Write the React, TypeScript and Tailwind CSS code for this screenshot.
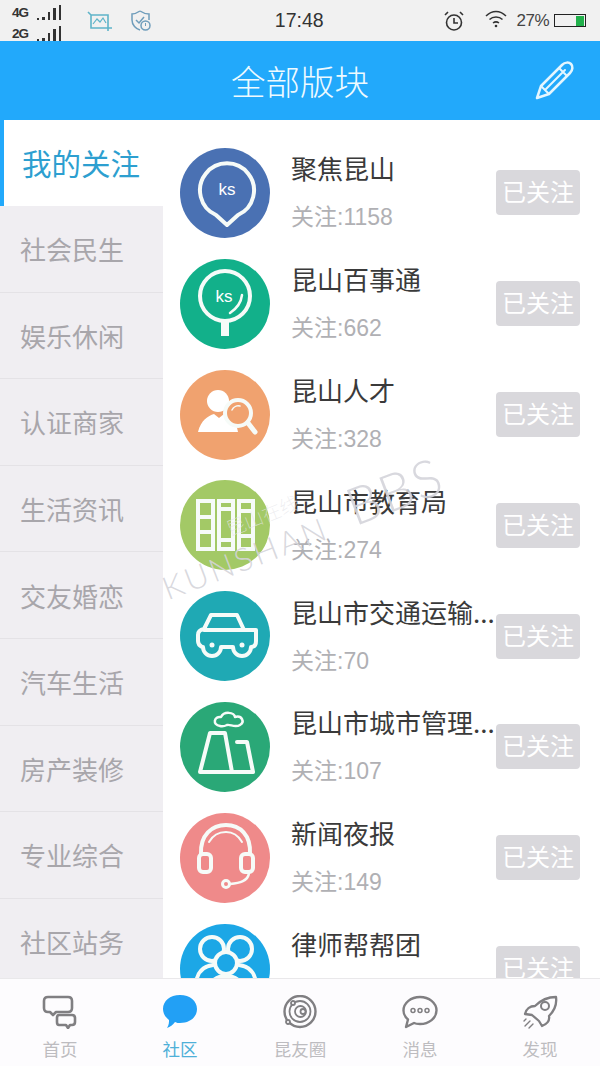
import type { ReactNode } from 'react'

const side = ['社会民生', '娱乐休闲', '认证商家', '生活资讯', '交友婚恋', '汽车生活', '房产装修', '专业综合', '社区站务']

function IconSvg({ children }: { children: ReactNode }) {
  return (
    <svg viewBox="0 0 90 90" className="w-[90px] h-[90px]" fill="none" stroke="#f6fbf8" strokeWidth="4" strokeLinecap="round" strokeLinejoin="round">
      {children}
    </svg>
  )
}

const rows: { name: string; count: number; color: string; icon: ReactNode }[] = [
  {
    name: '聚焦昆山',
    count: 1158,
    color: 'bg-[#4a71b3]',
    icon: (
      <IconSvg>
        <path d="M47 77 L36 67 A27 27 0 1 1 58 67 Z" />
        <text x="47" y="47" textAnchor="middle" fontSize="17" fill="#fff" stroke="none" fontFamily="Liberation Sans">ks</text>
      </IconSvg>
    ),
  },
  {
    name: '昆山百事通',
    count: 662,
    color: 'bg-[#12b08a]',
    icon: (
      <IconSvg>
        <circle cx="45" cy="37" r="25" />
        <path d="M45 62 V77" strokeWidth="8" strokeLinecap="butt" />
        <path d="M62 36 C61 45 56 50 50 54" strokeWidth="2.5" />
        <text x="44" y="43" textAnchor="middle" fontSize="17" fill="#fff" stroke="none" fontFamily="Liberation Sans">ks</text>
      </IconSvg>
    ),
  },
  {
    name: '昆山人才',
    count: 328,
    color: 'bg-[#f0a26f]',
    icon: (
      <IconSvg>
        <circle cx="38" cy="31" r="11" fill="#fff" stroke="none" />
        <path d="M18 62 C21 50 28 46 34 44 L39 48 L44 44 C50 46 56 50 58 62 Z" fill="#fff" stroke="none" />
        <circle cx="58" cy="43" r="13" fill="#f0a26f" strokeWidth="4" />
        <path d="M68 53 L75 62" strokeWidth="5" />
        <path d="M52 40 A7 7 0 0 1 60 36" strokeWidth="1.5" />
      </IconSvg>
    ),
  },
  {
    name: '昆山市教育局',
    count: 274,
    color: 'bg-[#a3c966]',
    icon: (
      <IconSvg>
        <rect x="18" y="21" width="15" height="48" strokeLinejoin="miter" />
        <path d="M18 37 H33 M18 52 H33" strokeLinecap="butt" />
        <rect x="39" y="21" width="14" height="48" strokeLinejoin="miter" />
        <path d="M39 29 H53 M39 60 H53" strokeLinecap="butt" />
        <rect x="59" y="21" width="14" height="48" strokeLinejoin="miter" />
        <path d="M59 31 H73 M59 56 H73" strokeLinecap="butt" />
      </IconSvg>
    ),
  },
  {
    name: '昆山市交通运输...',
    count: 70,
    color: 'bg-[#1fa9b4]',
    icon: (
      <IconSvg>
        <path d="M18 44 Q18 39 24 38 L31 24 H57 L64 39 H76 V50 Q76 56 71 56 A9 9 0 0 1 53 56 H41 A9 9 0 0 1 23 56 H22 Q18 54 18 50 Z" />
        <path d="M24 39 H64" />
        <circle cx="32" cy="54" r="2.5" fill="#f6fbf8" stroke="none" />
        <circle cx="62" cy="54" r="2.5" fill="#f6fbf8" stroke="none" />
      </IconSvg>
    ),
  },
  {
    name: '昆山市城市管理...',
    count: 107,
    color: 'bg-[#2aa877]',
    icon: (
      <IconSvg>
        <path d="M30 31 H45 L52 70 H20 Z" />
        <path d="M57 40 H67 L73 70 H52" />
        <path d="M40 24 C32 23 34 14 41 15 C44 9 54 10 55 15 C62 13 65 20 60 23 C55 26 50 22 47 23 C45 24 43 25 40 24 Z" strokeWidth="2.5" />
      </IconSvg>
    ),
  },
  {
    name: '新闻夜报',
    count: 149,
    color: 'bg-[#ef8a8a]',
    icon: (
      <IconSvg>
        <path d="M21 41 C20 22 32 12 46 12 C60 12 71 22 70 41" />
        <path d="M29 29 C33 22 39 19 46 19 C53 19 58 22 62 29" strokeWidth="2" />
        <rect x="19" y="41" width="12" height="18" rx="4" />
        <rect x="61" y="41" width="12" height="18" rx="4" />
        <path d="M69 60 C68 68 60 70 50 71" strokeWidth="2.5" />
        <circle cx="46" cy="71" r="3.5" strokeWidth="3" />
      </IconSvg>
    ),
  },
  {
    name: '律师帮帮团',
    count: 89,
    color: 'bg-[#1ca7e6]',
    icon: (
      <IconSvg>
        <circle cx="32" cy="25" r="12" />
        <circle cx="60" cy="25" r="12" />
        <circle cx="46" cy="39" r="11" fill="#1ca7e6" />
        <path d="M16 62 C16 48 24 42 33 41 M76 62 C76 48 68 42 59 41 M28 70 C28 58 36 52 46 52 C56 52 64 58 64 70" />
      </IconSvg>
    ),
  },
]

function Signal({ label }: { label: string }) {
  return (
    <div className="flex items-end justify-between h-[15px] text-[13.5px] leading-[14px] font-bold text-[#333] font-['Liberation_Sans',sans-serif]">
      <span className="tracking-[-1px]">{label}</span>
      <div className="flex items-end gap-[3px]">
        <div className="w-[2.5px] h-[2px] bg-[#333]" />
        <div className="w-[2.5px] h-[3px] bg-[#333]" />
        <div className="w-[2.5px] h-[8px] bg-[#333]" />
        <div className="w-[2.5px] h-[12px] bg-[#333]" />
        <div className="w-[2.5px] h-[15px] bg-[#333]" />
      </div>
    </div>
  )
}

function StatusBar() {
  return (
    <div className="h-[41px] shrink-0 bg-[#f1f1f1] flex items-center pl-[12px] pr-[14px] text-[#333]">
      <div className="w-[49px] flex flex-col gap-[6px] pt-[5px]">
        <Signal label="4G" />
        <Signal label="2G" />
      </div>
      <svg viewBox="0 0 25 20" className="w-[25px] h-[20px] ml-[26px]" fill="none" stroke="#5fb4c9" strokeWidth="1.6">
        <path d="M1 1 L4 4 V17 H25 M4 4 H21 V20" />
        <path d="M6 13 L10 8 L13 11 L16 7 L19 12" strokeWidth="1.2" />
      </svg>
      <svg viewBox="0 0 20 21" className="w-[20px] h-[21px] ml-[19px]" fill="none" stroke="#6f9dbb" strokeWidth="1.5">
        <path d="M9 1 C12 3 14 4 18 4 V10 M9 20 C5 19 1 15 1 10 V4 C4 4 6 3 9 1" />
        <path d="M5 10 L8 13 L13 7" />
        <circle cx="14.5" cy="15.5" r="4.5" />
        <path d="M14.5 13 V16" strokeWidth="1" />
      </svg>
      <div className="flex-1 text-center text-[19.5px] leading-none pl-[4px] font-['Liberation_Sans',sans-serif]">17:48</div>
      <svg viewBox="0 0 22 22" className="w-[22px] h-[22px]" fill="none" stroke="#333" strokeWidth="1.6">
        <circle cx="11" cy="12.5" r="7.5" />
        <path d="M11 8 V13 H15" />
        <path d="M2 5 L5 2 M20 5 L17 2" />
      </svg>
      <svg viewBox="0 0 22 18" className="w-[22px] h-[18px] ml-[20px] -mt-[3px]" fill="none" stroke="#333" strokeWidth="1.5">
        <path d="M1 6 C7 0 15 0 21 6 M4.5 9.5 C8 6 14 6 17.5 9.5 M8 13 C10 11.5 12 11.5 14 13" />
        <circle cx="11" cy="16" r="1.3" fill="#333" stroke="none" />
      </svg>
      <span className="ml-[9px] text-[17px] tracking-[-0.5px] text-[#444] font-['Liberation_Sans',sans-serif]">27%</span>
      <div className="ml-[5px] w-[32px] h-[13px] border border-[#222] flex justify-end items-center pr-[1px]">
        <div className="w-[8px] h-[10px] bg-[#22b14c]" />
      </div>
    </div>
  )
}

function Header() {
  return (
    <div className="h-[79px] shrink-0 bg-[#22a9fb] relative flex items-center justify-center text-[#eefaff] text-[34.5px] font-light">
      全部版块
      <svg viewBox="0 0 40 40" className="absolute right-[25px] top-[19px] w-[40px] h-[40px]" fill="none" stroke="#e4f6ff" strokeWidth="2.5" strokeLinejoin="round" strokeLinecap="round">
        <path d="M2 38 L6 26 L27 5 C30 2 34 2 36 4 C38 6 38 10 35 13 L14 34 Z" />
        <path d="M10 30 L30 10 M24 8 L32 16 M6 26 L14 34" strokeWidth="2" />
      </svg>
    </div>
  )
}

function Sidebar() {
  return (
    <div className="w-[163px] shrink-0 flex flex-col">
      <div className="h-[86px] shrink-0 bg-white border-l-4 border-[#22a9fb] pl-[18px] pb-[2px] flex items-center text-[29.5px] text-[#2d9fd0]">
        我的关注
      </div>
      <div className="flex-1 bg-[#f0eef2]">
        {side.map((s) => (
          <div key={s} className="h-[86.6px] pl-[20px] flex items-center text-[26px] text-[#a8a6ab] border-b border-[#e4e2e6]">
            {s}
          </div>
        ))}
      </div>
    </div>
  )
}

function ForumList() {
  return (
    <div className="flex-1 min-w-0 overflow-hidden pt-[17.6px] pl-[17px] pr-[20px]">
      {rows.map((r) => (
        <div key={r.name} className="h-[110.8px] flex items-center">
          <div className={`w-[90px] h-[90px] rounded-full shrink-0 ${r.color}`}>{r.icon}</div>
          <div className="w-[205px] ml-[21px] pb-[1px] shrink-0 flex flex-col">
            <div className="whitespace-nowrap text-[26px] leading-[36px] text-[#3a3a3a]">{r.name}</div>
            <div className="mt-[14px] text-[23px] leading-[34px] text-[#b0b0b4] font-['Liberation_Sans','Noto_Sans_CJK_SC',sans-serif]">关注:{r.count}</div>
          </div>
          <div className="ml-auto w-[84px] h-[45px] pb-[3px] shrink-0 rounded-[4px] bg-[#d9d8dc] text-white text-[24px] flex items-center justify-center">
            已关注
          </div>
        </div>
      ))}
    </div>
  )
}

const tabs: { label: string; active?: boolean; icon: ReactNode }[] = [
  {
    label: '首页',
    icon: (
      <svg viewBox="0 0 36 34" className="w-[36px] h-[34px]" fill="none" stroke="#807f82" strokeWidth="2.6" strokeLinejoin="round">
        <path d="M6 2 H26 Q30 2 30 6 V13 Q30 17 26 17 H14 L11 20 L8 17 H6 Q2 17 2 13 V6 Q2 2 6 2 Z" />
        <path d="M17 20 H30 Q33 20 33 23 V27 Q33 30 30 30 H28 L26 33 L24 30 H17 Q15 30 15 27 V23 Q15 20 17 20 Z" />
      </svg>
    ),
  },
  {
    label: '社区',
    active: true,
    icon: (
      <svg viewBox="0 0 36 34" className="w-[36px] h-[34px]" fill="#22a0f5">
        <path d="M18 0 C28 0 35 6 35 14 C35 22 28 28 18 28 C16 28 15 28 13 27 C11 30 8 32 5 33 C7 30 7 27 7 25 C3 22 1 18 1 14 C1 6 8 0 18 0 Z" />
      </svg>
    ),
  },
  {
    label: '昆友圈',
    icon: (
      <svg viewBox="0 0 36 34" className="w-[36px] h-[34px]" fill="none" stroke="#807f82" strokeWidth="1.8">
        <circle cx="18" cy="16.5" r="15.5" strokeWidth="2.4" />
        <circle cx="18" cy="16.5" r="10.5" />
        <circle cx="18.5" cy="16.5" r="5.5" />
        <circle cx="21" cy="16.5" r="2.5" />
        <circle cx="11" cy="8" r="2" fill="#fdfcfe" />
        <circle cx="6" cy="27" r="2" fill="#fdfcfe" />
      </svg>
    ),
  },
  {
    label: '消息',
    icon: (
      <svg viewBox="0 0 36 34" className="w-[36px] h-[34px]" fill="none" stroke="#807f82" strokeWidth="2.4" strokeLinejoin="round">
        <path d="M18 2 C27 2 34.5 8 34.5 15.5 C34.5 23 27 29 18 29 C16 29 14 29 12 28 L4 32 L6 24.5 C3 22 1.5 19 1.5 15.5 C1.5 8 9 2 18 2 Z" />
        <circle cx="11" cy="15.5" r="2" strokeWidth="1.5" />
        <circle cx="18" cy="15.5" r="2" strokeWidth="1.5" />
        <circle cx="25" cy="15.5" r="2" strokeWidth="1.5" />
      </svg>
    ),
  },
  {
    label: '发现',
    icon: (
      <svg viewBox="0 0 36 34" className="w-[36px] h-[34px]" fill="none" stroke="#807f82" strokeWidth="2.3" strokeLinejoin="round" strokeLinecap="round">
        <path d="M34 2 C35 9 33 15 27 21 C28 26 25 29 20 31 L17 26 L10 20 L3 19 C4 14 8 11 13 11 C19 5 26 2 34 2 Z" />
        <circle cx="23" cy="11" r="4" strokeWidth="2" />
        <path d="M3 31 L8 26 M7 33 L11 29 M2 26 L4 24" strokeWidth="1.4" />
      </svg>
    ),
  },
]

function TabBar() {
  return (
    <div className="relative h-[88px] shrink-0 bg-[#fdfcfe] border-t border-[#e9e8ea] grid grid-cols-5">
      {tabs.map((t) => (
        <div key={t.label} className="flex flex-col items-center pt-[16px]">
          {t.icon}
          <span className={`mt-[8px] text-[17.5px] leading-[24px] ${t.active ? 'text-[#4fb0d8]' : 'text-[#bdbcc0]'}`}>{t.label}</span>
        </div>
      ))}
    </div>
  )
}

export default function App() {
  return (
    <div className="relative w-[600px] h-[1066px] overflow-hidden bg-white flex flex-col font-['Noto_Sans_CJK_SC','Noto_Sans',sans-serif]">
      <StatusBar />
      <Header />
      <div className="flex-1 min-h-0 flex overflow-hidden">
        <Sidebar />
        <ForumList />
      </div>
      <TabBar />
      {/* watermark */}
      <div className="absolute left-[150px] top-[500px] -rotate-[21deg] flex items-end gap-[26px] leading-none text-[#d4d4da]/90 font-light font-['Lato',sans-serif] whitespace-nowrap pointer-events-none">
        <span className="text-[32px] tracking-[3px]">KUNSHAN</span>
        <span className="text-[52px] tracking-[2px]">BBS</span>
      </div>
      <div className="absolute left-[224px] top-[505px] -rotate-[22deg] text-[19px] leading-none text-[#e6e6ea]/80 font-thin whitespace-nowrap pointer-events-none">
        昆山在线
      </div>
    </div>
  )
}
